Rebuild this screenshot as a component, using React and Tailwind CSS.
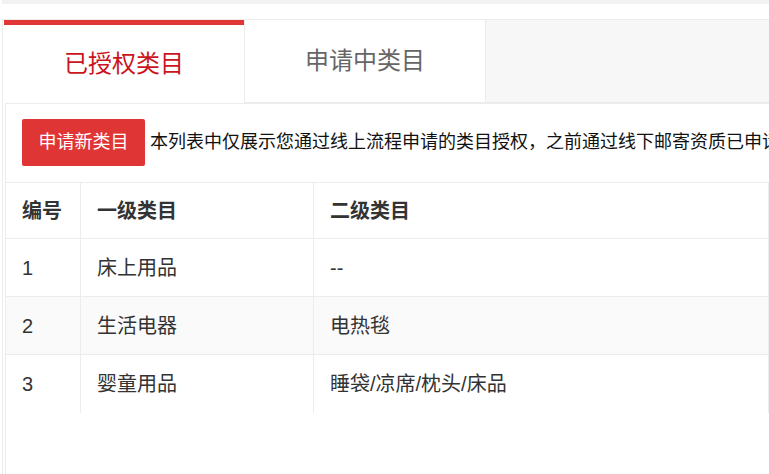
import React from "react";

const rows = [
  { id: 1, first: "床上用品", second: "--" },
  { id: 2, first: "生活电器", second: "电热毯" },
  { id: 3, first: "婴童用品", second: "睡袋/凉席/枕头/床品" },
];

export default function App() {
  return (
    <div className="w-[769px] h-[474px] overflow-hidden bg-white font-['Liberation_Sans','Noto_Sans_CJK_SC',sans-serif]">
      <div className="h-[4px] ml-[2px] bg-[#f2f2f2]" />
      <div className="h-[15px]" />

      <div className="ml-[2px] h-[455px] border-l border-[#ececec] flex flex-col">
        {/* tabs */}
        <div className="flex h-[84px] border-t border-[#ececec]">
          <div className="ml-[1px] w-[240px] border-t-[5px] border-[#e03636] flex items-center justify-center text-[24px] text-[#cc1420]">
            已授权类目
          </div>
          <div className="w-[242px] h-[83px] border-x border-b border-[#ececec] bg-white flex items-center justify-center text-[24px] text-[#666]">
            申请中类目
          </div>
          <div className="flex-1 h-[83px] bg-[#f7f7f7] border-b border-[#ececec]" />
        </div>

        {/* content panel */}
        <div className="ml-[2px] flex-1 border-l border-t border-[#ececec] bg-white">
          <div className="flex items-center pl-4 pt-[15px] pb-4">
            <button className="w-[123px] h-[47px] rounded-[2px] bg-[#e03535] text-white text-[18px] shrink-0">
              申请新类目
            </button>
            <span className="ml-[5px] text-[18px] text-[#111] whitespace-nowrap">
              本列表中仅展示您通过线上流程申请的类目授权，之前通过线下邮寄资质已申请的类目不在此处展示
            </span>
          </div>

          <div className="border-t border-r border-[#ececec] text-[20px] text-[#333]">
            <div className="grid grid-cols-[75px_233px_1fr] h-[56px] font-bold">
              <div className="flex items-center pl-4 border-r border-b border-[#ececec]">编号</div>
              <div className="flex items-center pl-4 border-r border-b border-[#ececec]">一级类目</div>
              <div className="flex items-center pl-4 border-b border-[#ececec]">二级类目</div>
            </div>
            {rows.map((r, i) => (
              <div
                key={r.id}
                className={`grid grid-cols-[75px_233px_1fr] h-[58px] ${i === 1 ? "bg-[#fafafa]" : "bg-white"}`}
              >
                <div className={`flex items-center pl-4 border-r border-[#ececec] ${i < 2 ? "border-b" : ""}`}>{r.id}</div>
                <div className={`flex items-center pl-4 border-r border-[#ececec] ${i < 2 ? "border-b" : ""}`}>{r.first}</div>
                <div className={`flex items-center pl-4 border-[#ececec] ${i < 2 ? "border-b" : ""}`}>{r.second}</div>
              </div>
            ))}
          </div>
        </div>
      </div>
    </div>
  );
}
